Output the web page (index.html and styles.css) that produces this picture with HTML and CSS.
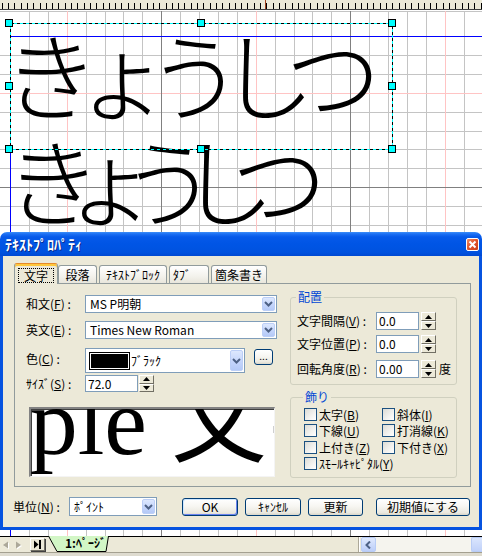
FILE: index.html
```html
<!DOCTYPE html>
<html lang="ja">
<head>
<meta charset="utf-8">
<title>テキストプロパティ</title>
<link rel="stylesheet" href="styles.css">
</head>
<body>
<div class="screen">
  <svg class="canvas" width="482" height="536" viewBox="0 0 482 536">
    <rect class="c-bg" x="0" y="0" width="482" height="536"/>
    <rect class="ruler" x="0" y="0" width="482" height="9"/>
    <line class="ruler-ticks" x1="1.7" y1="6" x2="482" y2="6"/>
    <line class="ruler-edge" x1="0" y1="9.5" x2="482" y2="9.5"/>
    <line class="ruler-mark" x1="265.5" y1="0" x2="265.5" y2="9"/>
    <path class="g-minor" d="M29.5 11V536M48.5 11V536M86.5 11V536M105.5 11V536M123.5 11V536M142.5 11V536M180.5 11V536M199.5 11V536M218.5 11V536M237.5 11V536M275.5 11V536M294.5 11V536M312.5 11V536M331.5 11V536M369.5 11V536M388.5 11V536M407.5 11V536M426.5 11V536M464.5 11V536M0 11.5H482M0 55.5H482M0 74.5H482M0 112.5H482M0 131.5H482M0 149.5H482M0 168.5H482M0 206.5H482M0 225.5H482"/>
    <path class="g-pink" d="M67.5 11V536M256.5 11V536M445.5 11V536M0 93.5H482"/>
    <path class="g-dark" d="M161.5 11V536M350.5 11V536M0 187.5H482"/>
    <path class="g-blue" d="M10.5 36V536M10 36.5H482"/>
    <text class="kana k1" x="3" y="113">きょうしつ</text>
    <text class="kana k2" x="5" y="219">きょうしつ</text>
    <rect class="sel-c" x="10.5" y="23.5" width="382" height="126"/>
    <rect class="sel-d" x="10.5" y="23.5" width="382" height="126"/>
    <rect class="handle" x="5.5" y="19.5" width="7" height="7"/>
    <rect class="handle" x="197.5" y="19.5" width="7" height="7"/>
    <rect class="handle" x="388.5" y="19.5" width="7" height="7"/>
    <rect class="handle" x="5.5" y="82.5" width="7" height="7"/>
    <rect class="handle" x="388.5" y="82.5" width="7" height="7"/>
    <rect class="handle" x="5.5" y="145.5" width="7" height="7"/>
    <rect class="handle" x="197.5" y="145.5" width="7" height="7"/>
    <rect class="handle" x="388.5" y="145.5" width="7" height="7"/>
  </svg>

  <div class="pagebar">
    <svg class="nav-dis" width="30" height="15" viewBox="0 0 30 15">
      <path class="tri-hi" d="M9 4.5L4 8L9 11.5Z"/>
      <path class="tri" d="M8 3.5L3 7L8 10.5Z"/>
      <path class="tri-hi" d="M17 4.5L22 8L17 11.5Z"/>
      <path class="tri" d="M16 3.5L21 7L16 10.5Z"/>
    </svg>
    <span class="nav-btn">
      <svg width="9" height="9" viewBox="0 0 9 9"><path class="tri-b" d="M1 0.5L5.5 4.5L1 8.5Z"/><rect class="tri-b" x="6" y="0" width="2" height="9"/></svg>
    </span>
    <svg class="pagetab" width="66" height="16" viewBox="0 0 66 16">
      <path class="pt-fill" d="M2.5 0L11 15.5L60 15.5L62.5 0Z"/>
      <path class="pt-line" d="M2.5 0L11 15.5L60 15.5L62.5 0"/>
      <text class="pt-text" x="19" y="12">1:ﾍﾟｰｼﾞ</text>
    </svg>
    <span class="sep"></span>
    <div class="hscroll">
      <span class="sb-btn">
        <svg width="7" height="8" viewBox="0 0 7 8"><path d="M5 0.5L1.5 4L5 7.5"/></svg>
      </span>
      <span class="sb-track"></span>
      <span class="sb-thumb"></span>
    </div>
  </div>

  <div class="dialog">
    <div class="titlebar">
      <span class="title">ﾃｷｽﾄﾌﾟﾛﾊﾟﾃｨ</span>
      <span class="close">
        <svg width="9" height="9" viewBox="0 0 9 9"><path d="M1.5 1.5L7.5 7.5M7.5 1.5L1.5 7.5"/></svg>
      </span>
    </div>
    <div class="dbody">
      <div class="tabs">
        <div class="tab tab-sel"><span class="focus">文字</span></div>
        <div class="tab w-dan">段落</div>
        <div class="tab w-blk">ﾃｷｽﾄﾌﾞﾛｯｸ</div>
        <div class="tab w-tab">ﾀﾌﾞ&nbsp;&nbsp;&nbsp;</div>
        <div class="tab w-lst">箇条書き</div>
      </div>
      <div class="panel">
        <div class="col-left">
          <div class="frow r1">
            <span class="flabel">和文(<u>F</u>) :</span>
            <div class="combo c-wide">
              <span class="ctext">MS P明朝</span>
              <span class="cbtn"><svg width="9" height="6" viewBox="0 0 9 6"><path d="M1 1L4.5 4.5L8 1"/></svg></span>
            </div>
          </div>
          <div class="frow r2">
            <span class="flabel">英文(<u>E</u>) :</span>
            <div class="combo c-wide">
              <span class="ctext">Times New Roman</span>
              <span class="cbtn"><svg width="9" height="6" viewBox="0 0 9 6"><path d="M1 1L4.5 4.5L8 1"/></svg></span>
            </div>
          </div>
          <div class="frow r3">
            <span class="flabel">色(<u>C</u>) :</span>
            <div class="combo c-color">
              <span class="swatch"></span>
              <span class="ctext ctext-color">ﾌﾞﾗｯｸ</span>
              <span class="cbtn"><svg width="9" height="6" viewBox="0 0 9 6"><path d="M1 1L4.5 4.5L8 1"/></svg></span>
            </div>
            <span class="btn btn-dots">...</span>
          </div>
          <div class="frow r4">
            <span class="flabel">ｻｲｽﾞ(<u>S</u>) :</span>
            <span class="num num-size">72.0</span>
            <span class="spin">
              <span class="spin-b"><svg width="7" height="4" viewBox="0 0 7 4"><path d="M0 4L3.5 0L7 4Z"/></svg></span>
              <span class="spin-b"><svg width="7" height="4" viewBox="0 0 7 4"><path d="M0 0L3.5 4L7 0Z"/></svg></span>
            </span>
          </div>
          <div class="preview">
            <span class="preview-text">Sample 文字</span>
          </div>
        </div>
        <div class="col-right">
          <fieldset class="grp g1">
            <legend>配置</legend>
            <div class="nrow">
              <span class="nlabel">文字間隔(<u>V</u>) :</span>
              <span class="num">0.0</span>
              <span class="spin">
                <span class="spin-b"><svg width="7" height="4" viewBox="0 0 7 4"><path d="M0 4L3.5 0L7 4Z"/></svg></span>
                <span class="spin-b"><svg width="7" height="4" viewBox="0 0 7 4"><path d="M0 0L3.5 4L7 0Z"/></svg></span>
              </span>
            </div>
            <div class="nrow n2">
              <span class="nlabel">文字位置(<u>P</u>) :</span>
              <span class="num">0.0</span>
              <span class="spin">
                <span class="spin-b"><svg width="7" height="4" viewBox="0 0 7 4"><path d="M0 4L3.5 0L7 4Z"/></svg></span>
                <span class="spin-b"><svg width="7" height="4" viewBox="0 0 7 4"><path d="M0 0L3.5 4L7 0Z"/></svg></span>
              </span>
            </div>
            <div class="nrow n3">
              <span class="nlabel">回転角度(<u>R</u>) :</span>
              <span class="num">0.00</span>
              <span class="spin">
                <span class="spin-b"><svg width="7" height="4" viewBox="0 0 7 4"><path d="M0 4L3.5 0L7 4Z"/></svg></span>
                <span class="spin-b"><svg width="7" height="4" viewBox="0 0 7 4"><path d="M0 0L3.5 4L7 0Z"/></svg></span>
              </span>
              <span class="unit">度</span>
            </div>
          </fieldset>
          <fieldset class="grp g2">
            <legend>飾り</legend>
            <div class="checks">
              <span class="chk"><span class="box"></span>太字(<u>B</u>)</span>
              <span class="chk"><span class="box"></span>斜体(<u>I</u>)</span>
              <span class="chk"><span class="box"></span>下線(<u>U</u>)</span>
              <span class="chk"><span class="box"></span>打消線(<u>K</u>)</span>
              <span class="chk"><span class="box"></span>上付き(<u>Z</u>)</span>
              <span class="chk"><span class="box"></span>下付き(<u>X</u>)</span>
              <span class="chk chk-wide"><span class="box"></span>ｽﾓｰﾙｷｬﾋﾟﾀﾙ(<u>Y</u>)</span>
            </div>
          </fieldset>
        </div>
      </div>
      <div class="footer">
        <span class="ulabel">単位(<u>N</u>) :</span>
        <div class="combo c-unit">
          <span class="ctext">ﾎﾟｲﾝﾄ</span>
          <span class="cbtn"><svg width="9" height="6" viewBox="0 0 9 6"><path d="M1 1L4.5 4.5L8 1"/></svg></span>
        </div>
        <span class="btn btn-def b-ok">OK</span>
        <span class="btn b-cancel">ｷｬﾝｾﾙ</span>
        <span class="btn b-upd">更新</span>
        <span class="btn b-init">初期値にする</span>
      </div>
    </div>
  </div>
</div>
</body>
</html>
```

FILE: styles.css
```css
* { box-sizing: border-box; }

body {
  margin: 0;
  width: 482px;
  height: 556px;
  overflow: hidden;
  font-family: "Noto Sans CJK JP", "Liberation Sans", sans-serif;
  font-size: 12px;
  line-height: 14px;
  color: #000;
  background: #ece9d8;
}

.screen {
  position: relative;
  width: 482px;
  height: 556px;
  background: #dedbcf;
}

/* ---------- canvas ---------- */
.canvas { display: block; }
.c-bg { fill: #fff; }
.ruler { fill: #ece9d8; }
.ruler-ticks {
  stroke: #000;
  stroke-width: 6;
  stroke-dasharray: 1 5.3;
  shape-rendering: crispEdges;
}
.ruler-edge { stroke: #404040; stroke-width: 1; }
.ruler-mark { stroke: #a0401c; stroke-width: 1; }
.g-minor, .g-pink, .g-dark, .g-blue {
  fill: none;
  stroke-width: 1;
  shape-rendering: crispEdges;
}
.g-minor { stroke: #c4c4c4; }
.g-pink { stroke: #ffc4c4; }
.g-dark { stroke: #808080; }
.g-blue { stroke: #0000ff; }

.kana {
  font-family: "Noto Sans CJK JP", sans-serif;
  font-size: 96px;
  font-weight: 300;
  fill: #000;
}
.k1 { letter-spacing: -24px; }
.k2 { letter-spacing: -38px; }

.sel-c { fill: none; stroke: #00ffff; stroke-width: 1; shape-rendering: crispEdges; }
.sel-d { fill: none; stroke: #000; stroke-width: 1; stroke-dasharray: 3 3; shape-rendering: crispEdges; }
.handle { fill: #00ffff; stroke: #000; stroke-width: 1; shape-rendering: crispEdges; }

/* ---------- page bar ---------- */
.pagebar {
  height: 17px;
  display: flex;
  align-items: flex-start;
  background: #ece9d8;
  border-top: 1px solid #000;
  border-bottom: 1px solid #a4a090;
}
.nav-dis { display: block; margin-top: 1px; flex: none; }
.tri { fill: #aca899; }
.tri-hi { fill: #fff; }
.nav-btn {
  flex: none;
  width: 15px;
  height: 13px;
  margin-top: 1px;
  display: flex;
  align-items: center;
  justify-content: center;
  background: #ece9d8;
  border: 1px solid;
  border-color: #fff #716f64 #716f64 #fff;
  box-shadow: 1px 1px 0 #404040;
}
.tri-b { fill: #000; }
.pagetab { display: block; flex: none; margin-left: 1px; margin-top: -1px; overflow: visible; }
.pt-fill { fill: #d2f6c6; }
.pt-line { fill: none; stroke: #000; stroke-width: 1; }
.pt-text { font-family: "Noto Sans CJK JP", sans-serif; font-size: 12px; font-weight: bold; fill: #000; }
.sep {
  flex: none;
  width: 2px;
  height: 15px;
  margin-left: auto;
  border-left: 1px solid #aca899;
  border-right: 1px solid #fff;
}
.hscroll {
  flex: none;
  width: 121px;
  height: 15px;
  margin-left: 1px;
  display: flex;
  background: #f5f4ee;
}
.sb-btn {
  flex: none;
  width: 15px;
  height: 15px;
  display: flex;
  align-items: center;
  justify-content: center;
  border: 1px solid #b8ccf6;
  border-radius: 2px;
  background: linear-gradient(#dfe9fe, #bccef8);
}
.sb-btn path { fill: none; stroke: #4d6185; stroke-width: 2; }
.sb-track { flex: 1; }
.sb-thumb {
  flex: none;
  width: 11px;
  height: 15px;
  border: 1px solid #b8ccf6;
  border-right: 0;
  border-radius: 2px 0 0 2px;
  background: linear-gradient(#dae5fd, #c0d1f9);
}

/* ---------- dialog ---------- */
.dialog {
  position: absolute;
  left: 0;
  top: 232px;
  width: 482px;
  height: 298px;
  display: flex;
  flex-direction: column;
}
.titlebar {
  flex: none;
  height: 24px;
  border-radius: 7px 7px 0 0;
  background: linear-gradient(#3d8ef8 0px, #1c6ff3 2px, #0659e9 5px, #0055e5 50%, #0052df 85%, #0049d2 100%);
  display: flex;
  align-items: center;
  justify-content: space-between;
  padding: 0 3px 0 5px;
}
.title {
  color: #fff;
  font-weight: bold;
  font-size: 14px;
  line-height: 16px;
  text-shadow: 1px 1px 0 #0a2a8a;
}
.close {
  width: 13px;
  height: 13px;
  border: 1px solid #fff;
  border-radius: 2px;
  background: linear-gradient(135deg, #f08a62, #e0532a 50%, #c8401c);
  display: flex;
  align-items: center;
  justify-content: center;
}
.close path { stroke: #fff; stroke-width: 2; fill: none; }

.dbody {
  flex: 1;
  background: #ece9d8;
  border: 3px solid #0653e0;
  border-top: 0;
  padding: 7px 8px 0 11px;
}

/* tabs */
.tabs {
  display: flex;
  align-items: flex-end;
  height: 21px;
  margin-bottom: -1px;
  position: relative;
  z-index: 1;
}
.tab {
  height: 18px;
  margin-bottom: 1px;
  border: 1px solid #919b9c;
  border-bottom: 0;
  border-radius: 3px 3px 0 0;
  background: linear-gradient(#ffffff, #f3f2ec 60%, #e8e6dc);
  display: flex;
  align-items: center;
  justify-content: center;
  white-space: nowrap;
}
.tab-sel {
  width: 44px;
  height: 21px;
  margin-bottom: 0;
  background: #ece9d8;
  border-top: 1px solid #e68b2c;
  box-shadow: inset 0 2px 0 #ffc83c;
  padding-top: 2px;
}
.focus {
  border: 1px dotted #000;
  padding: 0 5px;
  line-height: 13px;
}
.w-dan { width: 39px; }
.w-blk { width: 68px; margin-left: 2px; }
.w-tab { width: 40px; margin-left: 2px; justify-content: flex-start; padding-left: 3px; }
.w-lst { width: 56px; margin-left: 2px; }

/* panel */
.panel {
  height: 204px;
  border: 1px solid #919b9c;
  background: #ece9d8;
  display: grid;
  grid-template-columns: 251px 167px;
  column-gap: 13px;
  align-items: start;
  padding: 5px 0 0 11px;
}
.col-left { padding-top: 6px; }

.frow { display: flex; align-items: center; }
.flabel { width: 59px; flex: none; white-space: nowrap; }
.r1 { height: 18px; }
.r2 { height: 18px; margin-top: 8px; }
.r3 { height: 25px; margin-top: 9px; align-items: flex-start; }
.r3 .flabel { margin-top: 4px; }
.r4 { height: 17px; margin-top: 2px; }

.combo {
  flex: none;
  display: flex;
  align-items: stretch;
  border: 1px solid #7f9db9;
  background: #fff;
  padding: 1px;
}
.c-wide { width: 192px; height: 18px; }
.c-color { width: 160px; height: 25px; }
.c-unit { width: 88px; height: 19px; }
.ctext {
  flex: 1;
  padding-left: 3px;
  display: flex;
  align-items: center;
  white-space: nowrap;
}
.ctext-color { padding-left: 1px; }
.cbtn {
  flex: none;
  width: 13px;
  display: flex;
  align-items: center;
  justify-content: center;
  border: 1px solid #bccff7;
  border-radius: 2px;
  background: linear-gradient(#dde8fe, #c3d4fb 60%, #b4c9f7);
}
.cbtn path { fill: none; stroke: #4d6185; stroke-width: 2; }
.swatch {
  flex: none;
  width: 41px;
  height: 18px;
  margin: 2px 0 0 2px;
  background: #000;
  border: 1px solid #000;
  box-shadow: inset 0 0 0 1px #fff;
}

.btn {
  flex: none;
  display: flex;
  align-items: center;
  justify-content: center;
  height: 18px;
  border: 1px solid #003c74;
  border-radius: 3px;
  background: linear-gradient(#ffffff 0%, #f7f6f2 45%, #ebe9e0 85%, #d8d5c9 100%);
  white-space: nowrap;
}
.btn-dots {
  width: 19px;
  height: 16px;
  margin: 1px 0 0 9px;
  font-size: 10px;
  line-height: 10px;
  align-items: flex-end;
  padding-bottom: 3px;
}
.btn-def {
  box-shadow: inset 1px 1px 0 #cee7ff, inset -1px -1px 0 #6982ee;
}

.num {
  flex: none;
  display: flex;
  align-items: center;
  height: 17px;
  width: 43px;
  border: 1px solid #7f9db9;
  background: #fff;
  padding-left: 2px;
}
.num-size { width: 53px; }
.spin {
  flex: none;
  width: 15px;
  height: 17px;
  margin-left: 1px;
  display: flex;
  flex-direction: column;
}
.spin-b {
  flex: 1;
  display: flex;
  align-items: center;
  justify-content: center;
  background: #ece9d8;
  border: 1px solid;
  border-color: #fff #716f64 #716f64 #fff;
}
.spin-b path { fill: #000; }

.preview {
  width: 246px;
  height: 70px;
  margin: 15px 0 0 3px;
  background: #fff;
  border-top: 2px solid #828282;
  border-left: 2px solid #828282;
  border-right: 1px solid #f4f4f4;
  border-bottom: 1px solid #f4f4f4;
  box-shadow: inset 1px 1px 0 #404040;
  overflow: hidden;
  white-space: nowrap;
}
.preview-text {
  display: block;
  margin: 11px 0 0 -172px;
  font-family: "Liberation Serif", "Noto Sans CJK JP", serif;
  font-size: 96px;
  line-height: 4px;
}

/* group boxes */
.grp {
  margin: 0;
  width: 167px;
  min-width: 0;
  border: 1px solid #d0d0bf;
  border-radius: 3px;
}
.grp legend {
  padding: 0 2px;
  margin-left: -1px;
  color: #0046d5;
  font-size: 12px;
  line-height: 16px;
}
.g1 { padding: 7px 6px 6px 6px; }
.g2 { margin-top: 4px; padding: 3px 6px 3px 13px; }

.nrow { display: flex; align-items: center; height: 18px; }
.n2 { margin-top: 5px; }
.n3 { margin-top: 7px; }
.nlabel { width: 79px; flex: none; white-space: nowrap; }
.nrow .num { height: 18px; }
.nrow .spin { height: 18px; margin-left: 2px; }
.unit { margin-left: 3px; }

.checks {
  display: grid;
  grid-template-columns: 78px auto;
  grid-auto-rows: 16.4px;
}
.chk {
  display: flex;
  align-items: flex-start;
  white-space: nowrap;
  line-height: 13px;
}
.chk-wide { grid-column: 1 / span 2; }
.box {
  flex: none;
  width: 13px;
  height: 13px;
  margin-right: 2px;
  border: 1px solid #1c5180;
  background: linear-gradient(135deg, #dcdcd6, #f6f6f4 70%, #fff);
}

/* footer */
.footer {
  display: flex;
  align-items: center;
  height: 19px;
  margin: 10px 0 0 -1px;
}
.ulabel { width: 56px; flex: none; white-space: nowrap; }
.b-ok { width: 56px; margin-left: 25px; }
.b-cancel { width: 56px; margin-left: 7px; }
.b-upd { width: 55px; margin-left: 7px; }
.b-init { width: 94px; margin-left: 13px; }
```
